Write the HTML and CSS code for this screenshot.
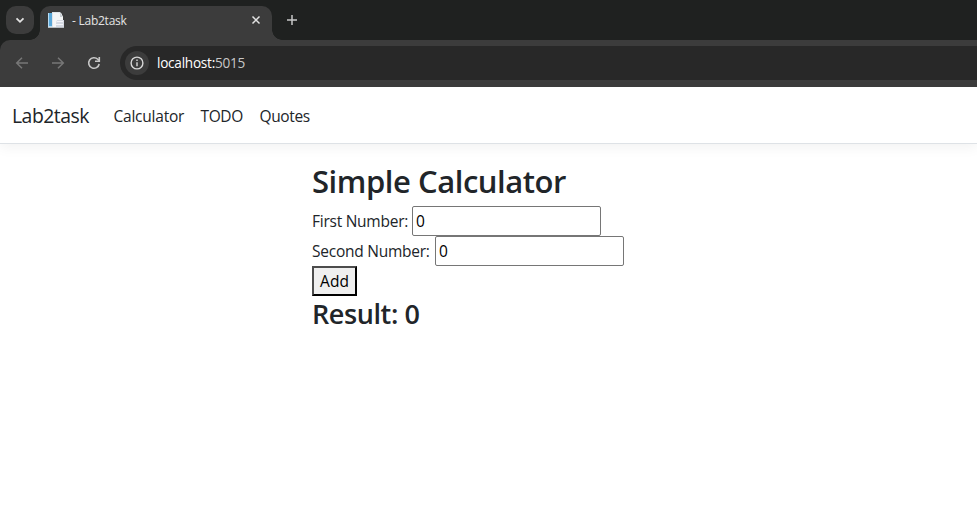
FILE: index.html
```html
<!DOCTYPE html>
<html lang="en">
<head>
<meta charset="utf-8">
<title>- Lab2task</title>
<link rel="stylesheet" href="styles.css">
</head>
<body>
<div class="browser">
  <div class="tabstrip">
    <div class="tab-search"><svg width="28" height="28" viewBox="0 0 28 28"><path d="M10.5 12.3l3.5 3.5 3.5-3.5" fill="none" stroke="#e3e3e3" stroke-width="1.8"/></svg></div>
    <div class="tab">
      <svg class="favicon" width="16" height="16" viewBox="0 0 16 16">
        <path d="M0 1h5v14H0z" fill="#b9dcf3"/><path d="M1 1h3v13H1z" fill="#5aa7d8"/>
        <path d="M4 0h8l2 2v13H4z" fill="#dfe5ea"/><path d="M5 1h6l4 3v11H5z" fill="#f5f6f7"/>
        <path d="M12 1v4h3z" fill="#c9ced3"/><path d="M9 8h7v7H8v-4z" fill="#d5dae3"/><path d="M9 9.5h6M8 12.5h7" stroke="#f4f5fa" stroke-width="1"/>
        <path d="M0 15.5h16" stroke="#b9bdc2"/>
      </svg>
      <span class="tab-title">- Lab2task</span>
      <svg class="close" width="10" height="10" viewBox="0 0 10 10"><path d="M1.5 1.5l7 7M8.5 1.5l-7 7" stroke="#e3e3e3" stroke-width="1.5"/></svg>
    </div>
    <svg class="plus" width="12" height="12" viewBox="0 0 12 12"><path d="M6 1v10M1 6h10" stroke="#c7c7c7" stroke-width="1.5"/></svg>
  </div>
  <div class="toolbar">
    <svg class="tool" width="16" height="16" viewBox="0 0 16 16"><path d="M14 8H3M8 2.7L2.7 8 8 13.3" fill="none" stroke="#777" stroke-width="1.5"/></svg>
    <svg class="tool" width="16" height="16" viewBox="0 0 16 16"><path d="M2 8h11M8 2.7L13.3 8 8 13.3" fill="none" stroke="#777" stroke-width="1.5"/></svg>
    <svg class="tool" width="16" height="16" viewBox="0 0 16 16"><path d="M13.2 9A5.3 5.3 0 1 1 11.8 4.3L13 5.5" fill="none" stroke="#c7c7c7" stroke-width="1.6"/><path d="M13.3 2v4.3H9" fill="none" stroke="#c7c7c7" stroke-width="1.6"/></svg>
    <div class="omnibox">
      <div class="site-info"><svg width="14" height="14" viewBox="0 0 14 14"><circle cx="7" cy="7" r="5.9" fill="none" stroke="#d8d8d8" stroke-width="1.4"/><path d="M7 6.2v4M7 3.6v1.5" stroke="#d8d8d8" stroke-width="1.4"/></svg></div>
      <span class="url">localhost:<span class="port">5015</span></span>
    </div>
  </div>
</div>
<header class="navbar">
  <span class="brand">Lab2task</span>
  <nav class="links"><a class="calc">Calculator</a><a class="todo">TODO</a><a class="quotes">Quotes</a></nav>
</header>
<main class="container">
  <h2 class="title">Simple Calculator</h2>
  <div class="field"><label class="first">First Number:</label><input type="text" value="0"></div>
  <div class="field"><label class="second">Second Number:</label><input type="text" value="0"></div>
  <button class="add" type="button">Add</button>
  <h3 class="result">Result: 0</h3>
</main>
</body>
</html>
```
FILE: styles.css
```css
* { box-sizing: border-box; }
body { margin: 0; height: 530px; overflow: hidden; background: #fff; color: #212529; font-family: "Open Sans", "Noto Sans", sans-serif; font-size: 15.5px; line-height: 24px; white-space: nowrap; }
svg { display: block; flex: none; }
.browser { background: #1f2120; height: 87px; }
.tabstrip { display: flex; height: 40px; padding: 6px 0 0 6px; }
.tab-search { width: 28px; height: 28px; border-radius: 10px; background: #3c3c3c; margin-right: 6px; }
.tab { position: relative; width: 232px; height: 34px; background: #3c3c3c; border-radius: 10px 10px 0 0; display: flex; align-items: center; padding: 0 11px 6px 8px; }
.tab::before, .tab::after { content: ""; position: absolute; bottom: 0; width: 10px; height: 10px; }
.tab::before { left: -10px; background: radial-gradient(circle at 0 0, transparent 9.5px, #3c3c3c 10px); }
.tab::after { right: -10px; background: radial-gradient(circle at 100% 0, transparent 9.5px, #3c3c3c 10px); }
.tab-title { margin-left: 8px; padding-top: 1px; font-size: 12px; letter-spacing: -0.25px; color: #e3e3e3; line-height: 16px; }
.close { margin-left: auto; }
.plus { margin: 8px 0 0 14px; }
.toolbar { height: 47px; background: #3c3c3c; border-radius: 10px 0 0; display: flex; align-items: center; padding: 0 0 1px 14px; }
.tool { margin-right: 20px; }
.omnibox { flex: 1; margin-left: -2px; height: 34px; border-radius: 17px 0 0 17px; background: #282828; display: flex; align-items: center; padding-left: 5px; }
.site-info { width: 24px; height: 24px; border-radius: 50%; background: #3c3c3c; display: grid; place-items: center; }
.url { margin-left: 8px; font-size: 13.6px; letter-spacing: -0.25px; color: #fff; }
.port { color: #c7c7c7; }
.navbar { height: 57px; border-bottom: 1px solid #dee2e6; box-shadow: 0 4px 12px rgba(0,0,0,.05); display: flex; align-items: center; padding: 2px 12px 0; }
.brand { width: 78px; margin-right: 23.5px; font-size: 19.4px; letter-spacing: -0.5px; }
.links { display: flex; gap: 16px; }
.links a { letter-spacing: -0.23px; }
.calc { width: 71px; }
.links .todo { width: 43px; letter-spacing: -0.4px; }
.links .quotes { width: 52px; letter-spacing: -0.35px; }
.container { margin-left: 312px; padding-top: 18px; }
.title, .result { margin: 0; font-weight: 600; }
.title { font-size: 31px; line-height: 38px; letter-spacing: -0.45px; margin-bottom: 6px; }
.field { display: flex; align-items: center; height: 30px; }
.field label { letter-spacing: -0.25px; }
.first { width: 100px; }
.second { width: 123px; }
input { width: 189px; height: 30px; margin: 0; padding: 1px 2px 1px 3px; border: 1px solid #767676; border-radius: 2px; background: #fff; color: #000; font: inherit; }
.add { display: block; width: 45px; height: 30px; padding: 0; border: 2px solid; border-color: #4c4c4c #000 #000 #4c4c4c; background: #efefef; color: #000; font: inherit; line-height: 24px; }
.result { font-size: 27px; line-height: 34px; letter-spacing: -0.4px; margin-top: 1px; }
```
